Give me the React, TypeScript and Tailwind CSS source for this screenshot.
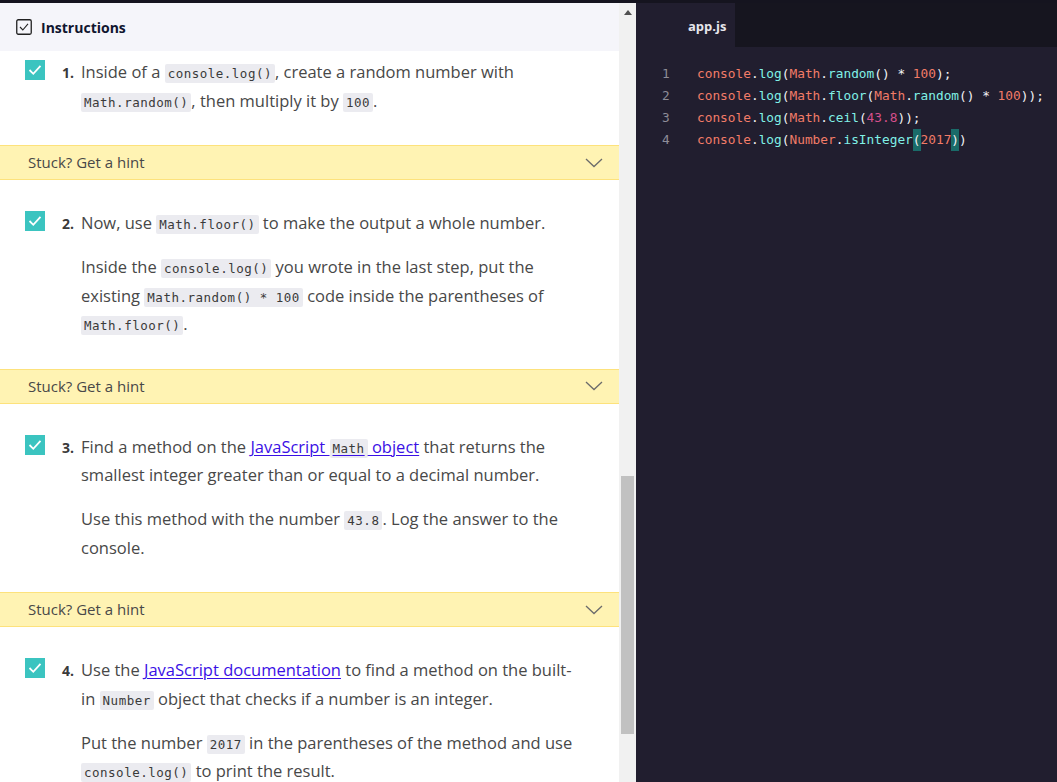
import React from 'react'

const C = ({ children }: { children: React.ReactNode }) => (
  <code className="rounded-[2px] bg-[#ebebf0] px-[3px] py-[2px] font-['DejaVu_Sans_Mono',monospace] text-[12.5px] leading-[16px] tracking-[0.5px] text-[#3a3a3a]">
    {children}
  </code>
)

const A = ({ children }: { children: React.ReactNode }) => (
  <a className="text-[#3a10e5] underline underline-offset-2 decoration-[1px]">{children}</a>
)

function Check() {
  return (
    <div className="mt-[2px] flex h-[20px] w-[20px] shrink-0 items-center justify-center bg-[#3bc4c0]">
      <svg width="14" height="12" viewBox="0 0 14 12" fill="none">
        <path d="M1.5 6 L5.3 9.8 L12.5 1.8" stroke="white" strokeWidth="1.8" />
      </svg>
    </div>
  )
}

function Step({ n, first, children }: { n: number; first?: boolean; children: React.ReactNode }) {
  return (
    <div className={`flex pl-[25px] pr-2 ${first ? 'pt-[7px]' : 'pt-[29px]'} pb-[30px]`}>
      <Check />
      <div className="ml-[17px] w-[19px] shrink-0 pt-[1px] text-[14px] font-bold leading-[28.5px] text-[#3a3a3a]">
        {n}.
      </div>
      <div className="flex flex-col gap-[15.5px] text-[16.5px] leading-[28.5px] text-[#484848]">{children}</div>
    </div>
  )
}

function Hint() {
  return (
    <div className="flex h-[35px] items-center justify-between border-y border-[#fde27c] bg-[#fff3b3] pl-[28px] pr-[16px] text-[15px] text-[#484848]">
      <span>Stuck? Get a hint</span>
      <svg width="18" height="10" viewBox="0 0 18 10" fill="none">
        <path d="M1 1 L9 8.5 L17 1" stroke="#6b6b6b" strokeWidth="1.3" />
      </svg>
    </div>
  )
}

const K = ({ c, children }: { c: string; children: React.ReactNode }) => <span className={c}>{children}</span>

const coral = 'text-[#f27c68]'
const cyan = 'text-[#80f0e6]'
const white = 'text-[#f2f2f5]'
const pink = 'text-[#d44f8b]'

function CodeLine({ n, children }: { n: number; children: React.ReactNode }) {
  return (
    <div className="flex h-[22px] items-center">
      <div className="w-[61px] shrink-0 pl-[26px] text-[#8e8d98]">{n}</div>
      <div className="whitespace-pre">{children}</div>
    </div>
  )
}

export default function App() {
  return (
    <div className="flex h-[782px] w-full flex-col overflow-hidden bg-[#15141f] font-['Open_Sans',sans-serif]">
      <div className="h-[3px] shrink-0 bg-[#15141f]" />
      <div className="flex min-h-0 flex-1">
        {/* instructions pane */}
        <div className="flex w-[619px] shrink-0 flex-col bg-white">
          <div className="flex h-[48px] shrink-0 items-center gap-[9px] bg-[#f5f5fa] pl-4">
            <svg width="16" height="16" viewBox="0 0 16 16" fill="none">
              <rect x="0.75" y="0.75" width="14.5" height="14.5" rx="1.5" stroke="#222" strokeWidth="1.3" />
              <path d="M4 8 L6.8 11 L12 4.8" stroke="#222" strokeWidth="1.1" />
            </svg>
            <span className="text-[14px] font-bold text-[#10162f]">Instructions</span>
          </div>
          <div className="min-h-0 flex-1 overflow-hidden">
            <Step n={1} first>
              <p>
                Inside of a <C>console.log()</C>, create a random number with
                <br />
                <C>Math.random()</C>, then multiply it by <C>100</C>.
              </p>
            </Step>
            <Hint />
            <Step n={2}>
              <p>
                Now, use <C>Math.floor()</C> to make the output a whole number.
              </p>
              <p>
                Inside the <C>console.log()</C> you wrote in the last step, put the
                <br />
                existing <C>Math.random() * 100</C> code inside the parentheses of
                <br />
                <C>Math.floor()</C>.
              </p>
            </Step>
            <Hint />
            <Step n={3}>
              <p>
                Find a method on the{' '}
                <A>
                  JavaScript <C>Math</C> object
                </A>{' '}
                that returns the
                <br />
                smallest integer greater than or equal to a decimal number.
              </p>
              <p>
                Use this method with the number <C>43.8</C>. Log the answer to the
                <br />
                console.
              </p>
            </Step>
            <Hint />
            <Step n={4}>
              <p>
                Use the <A>JavaScript documentation</A> to find a method on the built-
                <br />
                in <C>Number</C> object that checks if a number is an integer.
              </p>
              <p>
                Put the number <C>2017</C> in the parentheses of the method and use
                <br />
                <C>console.log()</C> to print the result.
              </p>
            </Step>
          </div>
        </div>

        {/* scrollbar */}
        <div className="flex w-[17px] shrink-0 flex-col items-center bg-[#f1f1f1]">
          <svg className="mt-[7px]" width="8" height="5" viewBox="0 0 8 5">
            <path d="M0 5 L4 0 L8 5 Z" fill="#505050" />
          </svg>
          <div className="mt-[461px] h-[258px] w-[13px] bg-[#c1c1c1]" />
        </div>

        {/* editor */}
        <div className="flex min-w-0 flex-1 flex-col bg-[#211e2f]">
          <div className="flex h-[44px] shrink-0 bg-[#16151f]">
            <div className="flex items-center bg-[#211e2f] pl-[52px] pr-[9px] pt-[3px] text-[13px] font-bold text-[#e6e6ec]">
              app.js
            </div>
          </div>
          <div className="pt-[16px] font-['DejaVu_Sans_Mono',monospace] text-[12.8px]">
            <CodeLine n={1}>
              <K c={coral}>console</K>
              <K c={white}>.</K>
              <K c={cyan}>log</K>
              <K c={white}>(</K>
              <K c={coral}>Math</K>
              <K c={white}>.</K>
              <K c={cyan}>random</K>
              <K c={white}>() * </K>
              <K c={coral}>100</K>
              <K c={white}>);</K>
            </CodeLine>
            <CodeLine n={2}>
              <K c={coral}>console</K>
              <K c={white}>.</K>
              <K c={cyan}>log</K>
              <K c={white}>(</K>
              <K c={coral}>Math</K>
              <K c={white}>.</K>
              <K c={cyan}>floor</K>
              <K c={white}>(</K>
              <K c={coral}>Math</K>
              <K c={white}>.</K>
              <K c={cyan}>random</K>
              <K c={white}>() * </K>
              <K c={coral}>100</K>
              <K c={white}>));</K>
            </CodeLine>
            <CodeLine n={3}>
              <K c={coral}>console</K>
              <K c={white}>.</K>
              <K c={cyan}>log</K>
              <K c={white}>(</K>
              <K c={coral}>Math</K>
              <K c={white}>.</K>
              <K c={cyan}>ceil</K>
              <K c={white}>(</K>
              <K c={pink}>43.8</K>
              <K c={white}>));</K>
            </CodeLine>
            <CodeLine n={4}>
              <K c={coral}>console</K>
              <K c={white}>.</K>
              <K c={cyan}>log</K>
              <K c={white}>(</K>
              <K c={coral}>Number</K>
              <K c={white}>.</K>
              <K c={cyan}>isInteger</K>
              <span className="inline-block bg-[#1a6b69] leading-[22px] text-[#f2f2f5]">(</span>
              <K c={coral}>2017</K>
              <span className="inline-block bg-[#1a6b69] leading-[22px] text-[#f2f2f5]">)</span>
              <K c={white}>)</K>
            </CodeLine>
          </div>
        </div>
      </div>
    </div>
  )
}
